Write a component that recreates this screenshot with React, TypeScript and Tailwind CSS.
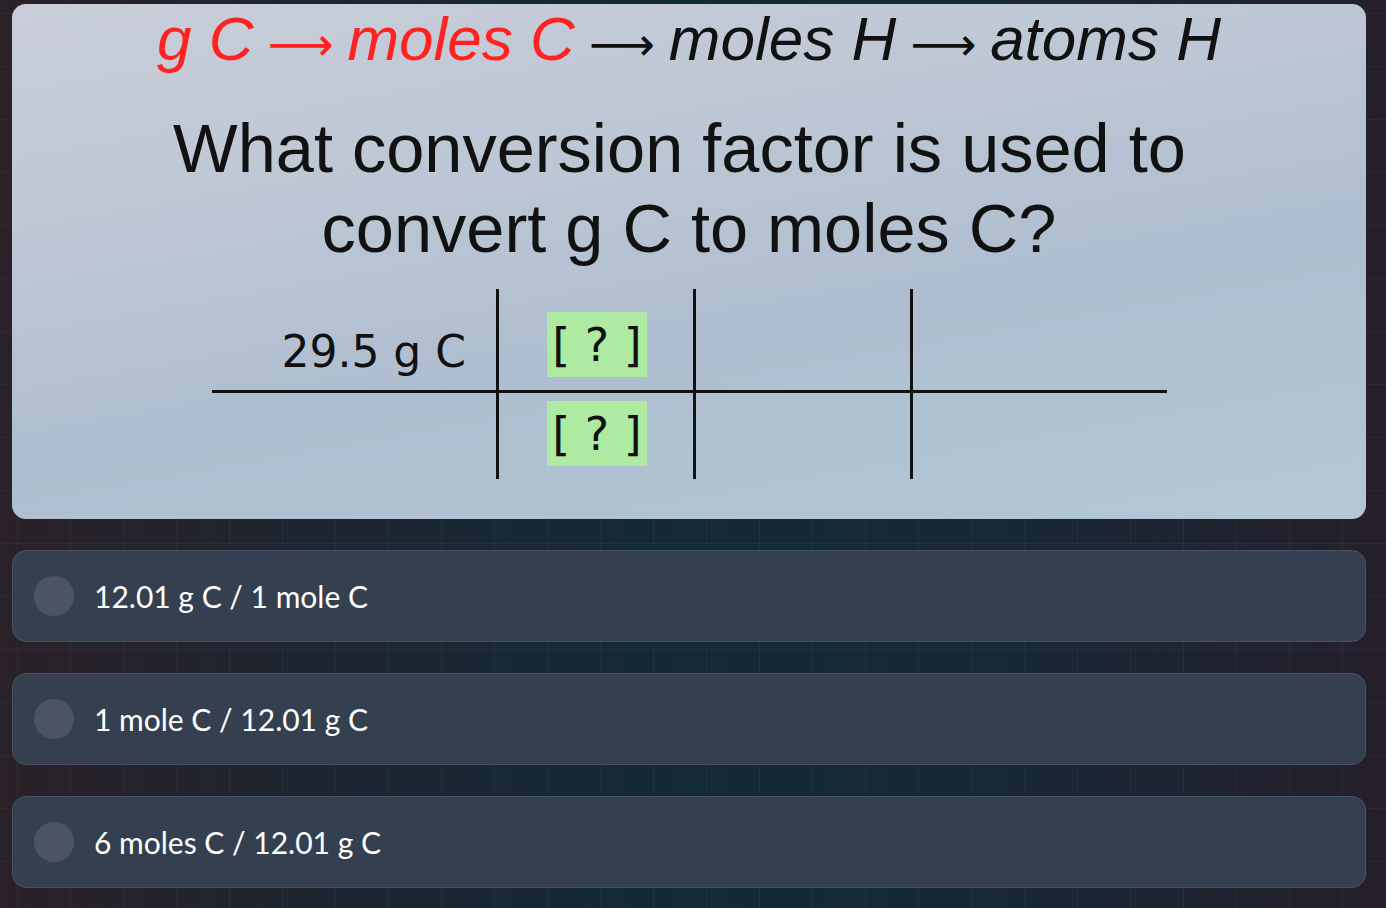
import React from "react";

const options = [
  "12.01 g C / 1 mole C",
  "1 mole C / 12.01 g C",
  "6 moles C / 12.01 g C",
];

function GreenBox() {
  return (
    <div
      className="w-[100px] h-[65px] bg-[#aeeaa2] flex items-center justify-center text-[46px] leading-none text-[#111]"
      style={{ fontFamily: '"DejaVu Sans", sans-serif' }}
    >
      [ ? ]
    </div>
  );
}

function Arrow() {
  return (
    <span
      className="not-italic inline-block mx-[14px] text-[46px]"
      style={{ fontFamily: '"DejaVu Sans", sans-serif' }}
    >
      ⟶
    </span>
  );
}

export default function App() {
  return (
    <div className="w-[1386px] h-[908px] overflow-hidden bg-[linear-gradient(90deg,#2b2128_0%,#1c2632_25%,#132a37_50%,#172836_72%,#261f2c_100%)]">
      <div className="w-full h-full bg-[linear-gradient(rgba(255,255,255,0.035)_1px,transparent_1px),linear-gradient(90deg,rgba(255,255,255,0.035)_1px,transparent_1px)] bg-size-[53px_53px] bg-position-[17px_13px] pt-[4px] pl-[12px] pr-[20px] flex flex-col">
        {/* Question card */}
        <div className="h-[515px] rounded-[14px] bg-[linear-gradient(170deg,#c9ced9_0%,#bcc6d4_35%,#aebed0_60%,#b3c7d5_100%)] flex flex-col items-center pt-[1px]">
          <div
            className="italic text-[62px] leading-[67px] whitespace-nowrap text-[#111] flex items-baseline"
            style={{ fontFamily: '"Liberation Sans", Arial, sans-serif' }}
          >
            <span className="text-[#ff2222]">g C</span>
            <span className="text-[#ff2222]"><Arrow /></span>
            <span className="text-[#ff2222]">moles C</span>
            <Arrow />
            <span>moles H</span>
            <Arrow />
            <span>atoms H</span>
          </div>
          <div
            className="mt-[31px] text-center text-[68.5px] leading-[80px] text-[#111]"
            style={{ fontFamily: '"Liberation Sans", Arial, sans-serif' }}
          >
            What conversion factor is used to{"\u00a0"}
            <br />
            convert g C to moles C?
          </div>
          {/* Dimensional analysis table */}
          <div className="mt-[20px] self-start ml-[200px] flex h-[190px]">
            <div className="w-[287px] border-r-[3px] border-[#111] flex flex-col">
              <div
                className="h-[104px] border-b-[3px] border-[#111] flex justify-end pr-[30px] pt-[41px] text-[44px] leading-[44px] text-[#111]"
                style={{ fontFamily: '"DejaVu Sans", sans-serif' }}
              >
                29.5 g C
              </div>
              <div className="flex-1" />
            </div>
            <div className="w-[197px] border-r-[3px] border-[#111] flex flex-col">
              <div className="h-[104px] border-b-[3px] border-[#111] pl-[48px] pt-[23px]">
                <GreenBox />
              </div>
              <div className="flex-1 pl-[48px] pt-[8px]">
                <GreenBox />
              </div>
            </div>
            <div className="w-[217px] border-r-[3px] border-[#111] flex flex-col">
              <div className="h-[104px] border-b-[3px] border-[#111]" />
            </div>
            <div className="w-[254px] flex flex-col">
              <div className="h-[104px] border-b-[3px] border-[#111]" />
            </div>
          </div>
        </div>

        {/* Options */}
        <div className="mt-[31px] flex flex-col gap-[31px]">
          {options.map((o) => (
            <div
              key={o}
              className="h-[92px] rounded-[14px] bg-[#344050] border-[1.5px] border-[#465265] flex items-center pl-[21px] gap-[20px]"
            >
              <div className="w-[40px] h-[40px] rounded-full bg-[#4a5465]" />
              <div
                className="text-[30px] text-white leading-none"
                style={{ fontFamily: "Lato, sans-serif" }}
              >
                {o}
              </div>
            </div>
          ))}
        </div>
      </div>
    </div>
  );
}
